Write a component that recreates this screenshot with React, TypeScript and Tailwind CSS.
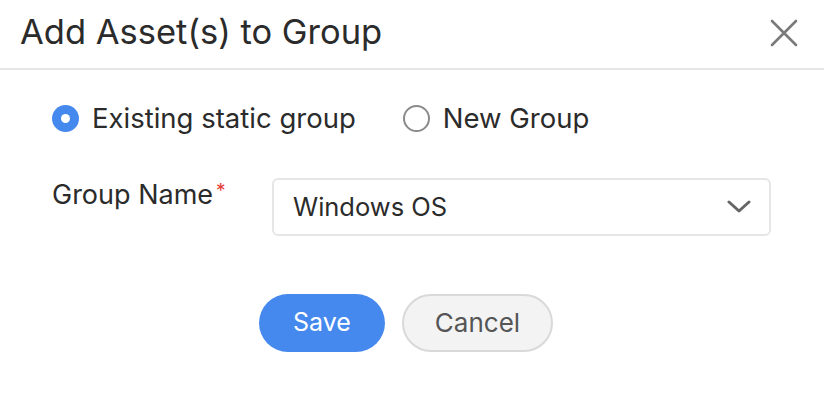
import React from "react";

const App = () => {
  return (
    <div
      className="h-[396px] w-[824px] bg-white text-[#2b2b2b]"
      style={{ fontFamily: "Inter, 'Noto Sans', sans-serif" }}
    >
      <div className="flex h-[70px] items-center justify-between border-b-2 border-[#e6e6e6] pb-[3px] pl-[20px] pr-[26px]">
        <span className="text-[34.5px] leading-none">Add Asset(s) to Group</span>
        <svg width="28" height="28" viewBox="0 0 28 28" className="text-[#7a7a7a]">
          <path d="M2 2 L26 26 M26 2 L2 26" stroke="currentColor" strokeWidth="2.6" strokeLinecap="round" />
        </svg>
      </div>

      <div className="flex items-center pl-[52px] pt-[35px]">
        <span className="flex h-[27px] w-[27px] items-center justify-center rounded-full bg-[#4589ee]">
          <span className="h-[9px] w-[9px] rounded-full bg-white" />
        </span>
        <span className="ml-[13px] text-[27.5px] leading-none">Existing static group</span>
        <span className="ml-[47px] h-[27px] w-[27px] rounded-full border-2 border-[#8a8a8a]" />
        <span className="ml-[13px] text-[27.5px] leading-none">New Group</span>
      </div>

      <div className="mt-[45px] flex items-start pl-[52px]">
        <div className="w-[220px] pt-[3px] text-[27px] leading-none">
          Group Name<span className="ml-[3px] align-top text-[19px] text-[#e53935]">*</span>
        </div>
        <div className="flex h-[58px] w-[499px] items-center justify-between rounded-[6px] border-2 border-[#e6e6e6] pl-[19px] pr-[18px]">
          <span className="text-[25.5px] leading-none">Windows OS</span>
          <svg width="24" height="14" viewBox="0 0 24 14" className="text-[#666]">
            <path d="M2 2 L12 11 L22 2" stroke="currentColor" strokeWidth="3" fill="none" strokeLinecap="round" strokeLinejoin="round" />
          </svg>
        </div>
      </div>

      <div className="mt-[58px] flex justify-center gap-[17px] pr-[12px]">
        <button className="h-[58px] w-[126px] rounded-full bg-[#4589ee] text-[25px] text-white">Save</button>
        <button className="h-[58px] w-[151px] rounded-full border-2 border-[#d9d9d9] bg-[#f3f3f3] text-[26px] text-[#555]">
          Cancel
        </button>
      </div>
    </div>
  );
};

export default App;
